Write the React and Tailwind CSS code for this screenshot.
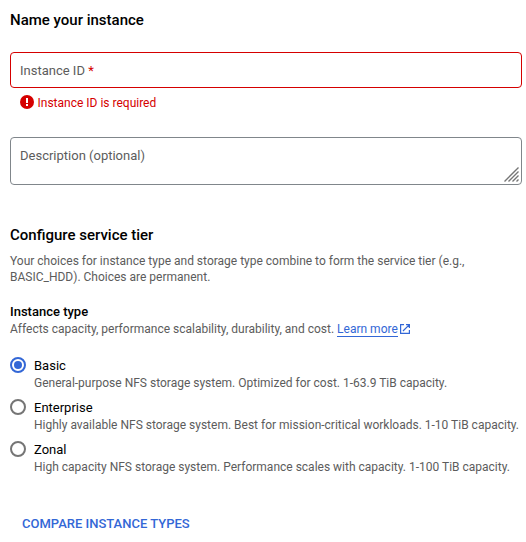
const options = [
  { name: "Basic", detail: "General-purpose NFS storage system. Optimized for cost. 1-63.9 TiB capacity.", checked: true },
  { name: "Enterprise", detail: "Highly available NFS storage system. Best for mission-critical workloads. 1-10 TiB capacity." },
  { name: "Zonal", detail: "High capacity NFS storage system. Performance scales with capacity. 1-100 TiB capacity." },
];

function Radio({ checked }) {
  return (
    <span
      className={
        checked
          ? "flex size-4 shrink-0 items-center justify-center rounded-full border-2 border-[#3367d6]"
          : "flex size-4 shrink-0 rounded-full border-2 border-[#757575]"
      }
    >
      {checked && <span className="size-2 rounded-full bg-[#3367d6]" />}
    </span>
  );
}

export default function App() {
  return (
    <main className="flex h-[542px] w-[526px] flex-col overflow-hidden bg-white pt-2.5 pr-1 pl-2.5 font-['Roboto',sans-serif] text-xs leading-4 text-[#5c5c5c]">
      <h2 className="text-[15px] leading-5 font-medium text-black">Name your instance</h2>

      <div className="mt-[22px] flex h-9 items-center rounded border border-[#d50000] px-[9px] pt-0.5 text-[13px]">
        Instance ID&nbsp;<span className="text-[#d50000]">*</span>
      </div>
      <div className="mt-[7px] flex h-4 gap-[3.5px] pl-2.5 text-[#d50000]">
        <svg className="size-3.5" viewBox="0 0 14 14">
          <circle cx="7" cy="7" r="7" fill="currentColor" />
          <path d="M6 3h2v5H6zM6 9h2v2H6z" fill="white" />
        </svg>
        <span>Instance ID is required</span>
      </div>

      <div className="mt-[26px] flex h-12 justify-between rounded border border-[#80868b] pt-2.5 pl-[9px] text-[13px]">
        <span>Description (optional)</span>
        <svg className="mr-0.5 mb-0.5 size-[15px] self-end" viewBox="0 0 15 15" fill="none" stroke="#757575" strokeWidth="1.4">
          <path d="M.5 14.5l14-14M4.5 14.5l10-10M8.5 14.5l6-6M12.5 14.5l2-2" />
        </svg>
      </div>

      <h2 className="mt-10 text-[15px] leading-5 font-medium text-black">Configure service tier</h2>
      <p className="mt-2 whitespace-nowrap">
        Your choices for instance type and storage type combine to form the service tier (e.g.,
        <br />
        BASIC_HDD). Choices are permanent.
      </p>

      <h3 className="mt-[19px] text-[13px] leading-4 font-medium text-black">Instance type</h3>
      <div className="mt-px flex h-4 whitespace-nowrap">
        Affects capacity, performance scalability, durability, and cost.&nbsp;
        <a className="h-4 border-b border-[#3367d6] text-[#3367d6]">Learn more</a>
        <svg className="mt-[3px] ml-0.5 size-2.5" viewBox="0 0 10 10" fill="none" stroke="#3367d6" strokeWidth="1.2">
          <path d="M4 .6H.6v8.8h8.8V6M6 .6h3.4V4M9.4.6L3 7" />
        </svg>
      </div>

      <div className="mt-5 flex flex-col gap-2">
        {options.map((o) => (
          <div key={o.name} className="flex h-[34px] gap-2">
            <Radio checked={o.checked} />
            <div className="whitespace-nowrap">
              <div className="h-[18px] text-[13px] leading-[18px] text-black">{o.name}</div>
              <div>{o.detail}</div>
            </div>
          </div>
        ))}
      </div>

      <button className="mt-[41px] self-start pl-3 text-[13px] leading-4 font-medium text-[#3367d6]">
        COMPARE INSTANCE TYPES
      </button>
    </main>
  );
}
